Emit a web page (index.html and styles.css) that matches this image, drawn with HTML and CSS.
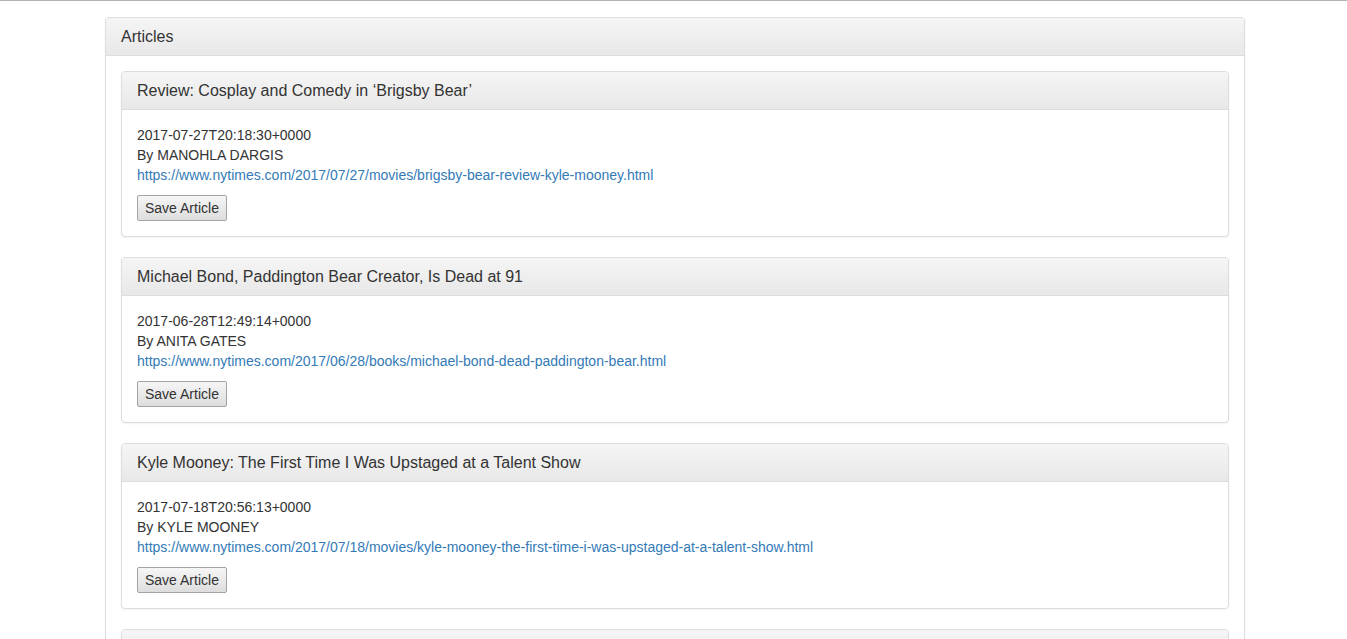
FILE: index.html
```html
<!DOCTYPE html>
<html>
<head>
<meta charset="utf-8">
<title>Articles</title>
<link rel="stylesheet" href="styles.css">
</head>
<body>
<div class="topline"></div>
<div class="container">
  <div class="panel outer">
    <div class="panel-heading">Articles</div>
    <div class="panel-body">
      <div class="panel inner">
        <div class="panel-heading">Review: Cosplay and Comedy in ‘Brigsby Bear’</div>
        <div class="panel-body">
          <div class="line">2017-07-27T20:18:30+0000</div>
          <div class="line">By MANOHLA DARGIS</div>
          <div class="line"><a href="#">https://www.nytimes.com/2017/07/27/movies/brigsby-bear-review-kyle-mooney.html</a></div>
          <button class="btn">Save Article</button>
        </div>
      </div>
      <div class="panel inner">
        <div class="panel-heading">Michael Bond, Paddington Bear Creator, Is Dead at 91</div>
        <div class="panel-body">
          <div class="line">2017-06-28T12:49:14+0000</div>
          <div class="line">By ANITA GATES</div>
          <div class="line"><a href="#">https://www.nytimes.com/2017/06/28/books/michael-bond-dead-paddington-bear.html</a></div>
          <button class="btn">Save Article</button>
        </div>
      </div>
      <div class="panel inner">
        <div class="panel-heading">Kyle Mooney: The First Time I Was Upstaged at a Talent Show</div>
        <div class="panel-body">
          <div class="line">2017-07-18T20:56:13+0000</div>
          <div class="line">By KYLE MOONEY</div>
          <div class="line"><a href="#">https://www.nytimes.com/2017/07/18/movies/kyle-mooney-the-first-time-i-was-upstaged-at-a-talent-show.html</a></div>
          <button class="btn">Save Article</button>
        </div>
      </div>
      <div class="panel inner">
        <div class="panel-heading empty"></div>
        <div class="panel-body empty-body"></div>
      </div>
    </div>
  </div>
</div>
</body>
</html>
```

FILE: styles.css
```css
html, body {
  margin: 0;
  padding: 0;
  background: #fff;
}
body {
  font-family: "Liberation Sans", Arial, sans-serif;
  font-size: 14px;
  line-height: 20px;
  color: #333;
  overflow: hidden;
}
.topline {
  height: 1px;
  background: #b3b3b3;
}
.container {
  width: 1140px;
  margin: 16px 0 0 105px;
}
.panel {
  background: #fff;
  border: 1px solid #ddd;
  border-radius: 4px;
  margin-bottom: 20px;
  box-shadow: 0 1px 2px rgba(0, 0, 0, 0.05);
}
.panel-heading {
  padding: 10px 15px;
  font-size: 16px;
  line-height: 17px;
  color: #333;
  background-image: linear-gradient(to bottom, #f5f5f5 0%, #e8e8e8 100%);
  border-bottom: 1px solid #ddd;
  border-radius: 3px 3px 0 0;
}
.panel-heading.empty {
  height: 17px;
}
.panel-body {
  padding: 15px;
}
.empty-body {
  height: 100px;
}
.line {
  line-height: 20px;
}
a {
  color: #337ab7;
  text-decoration: none;
}
.btn {
  margin-top: 10px;
  display: block;
  font-family: "Liberation Sans", Arial, sans-serif;
  font-size: 14px;
  line-height: 20px;
  color: #333;
  height: 26px;
  padding: 2px 7px;
  border: 1px solid #a3a3a3;
  border-radius: 2px;
  background: linear-gradient(to bottom, #f6f6f6 0%, #dddddd 100%);
}
```
